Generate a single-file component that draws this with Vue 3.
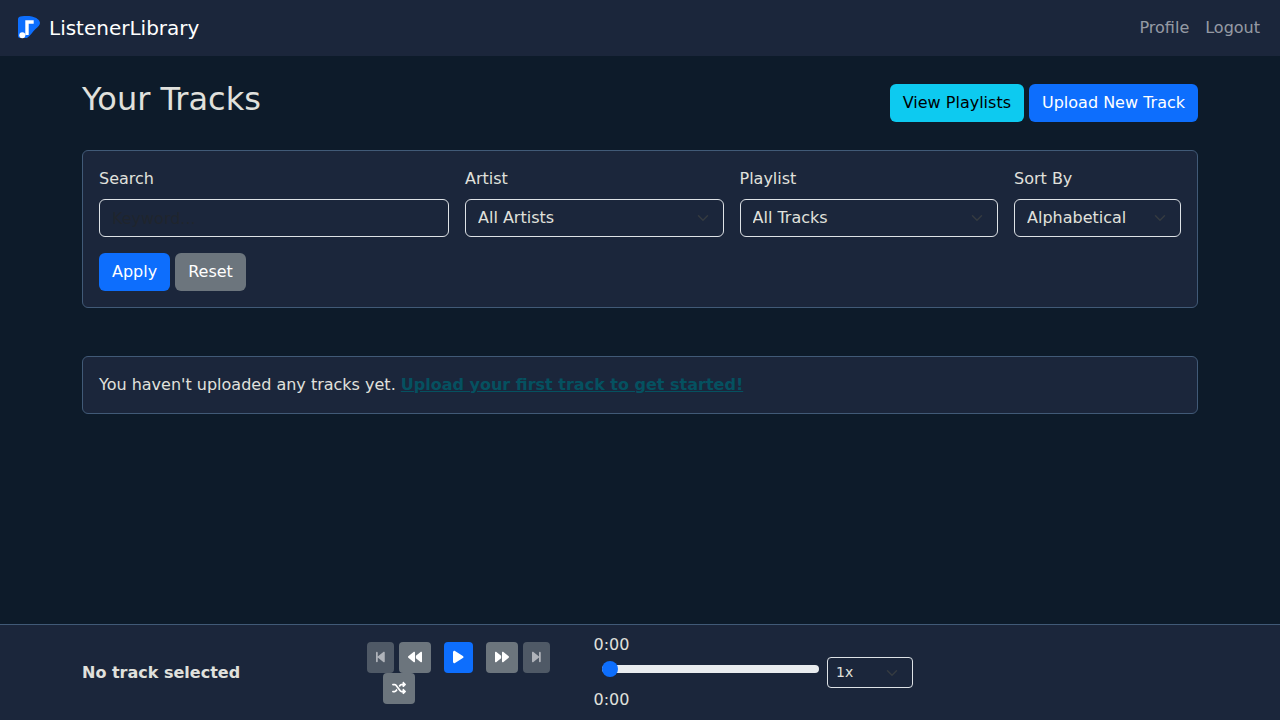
<template>
  <div class="page">
    <nav class="navbar">
      <a class="brand" href="#">
        <svg class="logo" viewBox="0 0 24 24" width="24" height="24">
          <path class="logo-bg" d="M1 3C1 1.500 2.500.5 5 .3 8 0 12 0 15 .5c4 .8 8 3.500 8 6.500 0 2-2 4-4.500 6-3 2.500-5 7-8.500 9H3c-1.200 0-2-1-2-2z" />
          <path class="logo-note" d="M8.300 19V4.300h8.400v3.400h-5V19z" />
          <circle class="logo-note" cx="5.300" cy="19.300" r="3" />
        </svg>
        ListenerLibrary
      </a>
      <div class="nav-links">
        <a href="#">Profile</a>
        <a href="#">Logout</a>
      </div>
    </nav>

    <main class="container">
      <div class="heading">
        <h1>Your Tracks</h1>
        <div class="heading-actions">
          <a class="btn btn-info" href="#">View Playlists</a>
          <a class="btn btn-primary" href="#">Upload New Track</a>
        </div>
      </div>

      <form class="card filters" @submit.prevent>
        <div class="row">
          <div class="col col-4">
            <label for="search">Search</label>
            <input id="search" v-model="search" class="field" type="text" placeholder="Keyword..." />
          </div>
          <div class="col col-3">
            <label for="artist">Artist</label>
            <select id="artist" v-model="artist" class="field select">
              <option>All Artists</option>
            </select>
          </div>
          <div class="col col-3">
            <label for="playlist">Playlist</label>
            <select id="playlist" v-model="playlist" class="field select">
              <option>All Tracks</option>
            </select>
          </div>
          <div class="col col-2">
            <label for="sort">Sort By</label>
            <select id="sort" v-model="sort" class="field select">
              <option>Alphabetical</option>
              <option>Newest</option>
            </select>
          </div>
        </div>
        <div class="filter-actions">
          <button class="btn btn-primary" type="submit">Apply</button>
          <button class="btn btn-secondary" type="button" @click="search = ''">Reset</button>
        </div>
      </form>

      <div class="card empty">
        You haven't uploaded any tracks yet.
        <a href="#">Upload your first track to get started!</a>
      </div>
    </main>

    <footer class="player">
      <div class="now-playing">No track selected</div>
      <div class="controls">
        <div class="controls-row">
          <button class="ctl ctl-skip" disabled>
            <svg viewBox="0 0 320 512" width="8.75" height="14"><path d="M267.500 440.600c9.500 7.900 22.800 9.700 34.100 4.400s18.400-16.600 18.400-29V96c0-12.400-7.200-23.700-18.400-29s-24.500-3.600-34.100 4.400l-192 160L64 241V96c0-17.700-14.300-32-32-32S0 78.300 0 96V416c0 17.700 14.300 32 32 32s32-14.300 32-32V271l11.500 9.600 192 160z" /></svg>
          </button>
          <button class="ctl">
            <svg viewBox="0 0 512 512" width="14" height="14"><path d="M459.500 440.600c9.500 7.900 22.800 9.700 34.100 4.400s18.400-16.600 18.400-29V96c0-12.400-7.200-23.700-18.400-29s-24.500-3.600-34.100 4.400L288 214.300V256v41.700L459.500 440.600zM256 352V256 128 96c0-12.400-7.200-23.700-18.400-29s-24.500-3.600-34.100 4.400l-192 160C4.200 237.500 0 246.500 0 256s4.200 18.500 11.500 24.600l192 160c9.500 7.900 22.800 9.700 34.100 4.400s18.400-16.600 18.400-29V352z" /></svg>
          </button>
          <button class="ctl ctl-play">
            <svg viewBox="0 0 384 512" width="10.5" height="14"><path d="M73 39c-14.800-9.100-33.400-9.400-48.500-.9S0 62.600 0 80V432c0 17.400 9.400 33.400 24.500 41.900s33.700 8.100 48.500-.9L361 297c14.300-8.700 23-24.200 23-41s-8.700-32.200-23-41L73 39z" /></svg>
          </button>
          <button class="ctl">
            <svg viewBox="0 0 512 512" width="14" height="14"><path d="M52.500 440.600c-9.500 7.900-22.800 9.700-34.100 4.400S0 428.400 0 416V96C0 83.600 7.200 72.300 18.400 67s24.500-3.600 34.100 4.400L224 214.300V256v41.700L52.500 440.600zM256 352V256 128 96c0-12.400 7.200-23.700 18.400-29s24.500-3.600 34.100 4.400l192 160c7.300 6.100 11.500 15.100 11.500 24.600s-4.200 18.500-11.500 24.600l-192 160c-9.500 7.900-22.800 9.700-34.100 4.400s-18.400-16.600-18.400-29V352z" /></svg>
          </button>
          <button class="ctl ctl-skip" disabled>
            <svg viewBox="0 0 320 512" width="8.75" height="14"><path d="M52.500 440.600c-9.500 7.900-22.800 9.700-34.100 4.400S0 428.400 0 416V96C0 83.600 7.200 72.300 18.400 67s24.500-3.600 34.100 4.400l192 160L256 241V96c0-17.700 14.300-32 32-32s32 14.300 32 32V416c0 17.700-14.300 32-32 32s-32-14.300-32-32V271l-11.500 9.600-192 160z" /></svg>
          </button>
        </div>
        <button class="ctl ctl-shuffle">
          <svg viewBox="0 0 512 512" width="14" height="14"><path d="M403.800 34.400c12-5 25.700-2.200 34.900 6.900l64 64c6 6 9.400 14.100 9.400 22.600s-3.400 16.600-9.400 22.600l-64 64c-9.200 9.200-22.900 11.900-34.900 6.900s-19.800-16.600-19.800-29.600V160H352c-10.100 0-19.600 4.700-25.600 12.800L284 229.300 244 176l31.200-41.600C293.300 110.200 321.800 96 352 96h32V64c0-12.900 7.800-24.600 19.800-29.600zM164 282.700L204 336l-31.200 41.600C154.700 401.800 126.200 416 96 416H32c-17.700 0-32-14.300-32-32s14.300-32 32-32H96c10.100 0 19.600-4.700 25.600-12.800L164 282.700zm274.600 188c-9.200 9.200-22.900 11.900-34.900 6.900s-19.800-16.600-19.800-29.600V416H352c-30.200 0-58.700-14.200-76.800-38.400L121.600 172.800c-6-8.100-15.500-12.800-25.600-12.800H32c-17.700 0-32-14.300-32-32s14.300-32 32-32H96c30.200 0 58.700 14.200 76.800 38.400L326.400 339.200c6 8.100 15.500 12.800 25.600 12.800h32V320c0-12.900 7.800-24.600 19.800-29.600s25.700-2.200 34.900 6.900l64 64c6 6 9.400 14.100 9.400 22.600s-3.400 16.600-9.400 22.600l-64 64z" /></svg>
        </button>
      </div>
      <div class="timeline">
        <div class="time">0:00</div>
        <div class="seek-row">
          <input v-model="position" class="seek" type="range" min="0" max="100" />
          <select v-model="speed" class="speed">
            <option>1x</option>
            <option>1.5x</option>
            <option>2x</option>
          </select>
        </div>
        <div class="time">0:00</div>
      </div>
    </footer>
  </div>
</template>

<script setup>
import { ref } from 'vue'

const search = ref('')
const artist = ref('All Artists')
const playlist = ref('All Tracks')
const sort = ref('Alphabetical')
const position = ref(0)
const speed = ref('1x')
</script>

<style>
html,
body {
  margin: 0;
  background: #0d1b2a;
}
</style>

<style scoped>
* {
  box-sizing: border-box;
}
.page {
  min-height: 100vh;
  display: flex;
  flex-direction: column;
  background: #0d1b2a;
  color: #e0e1dd;
  font-family: "DejaVu Sans", sans-serif;
  font-size: 16px;
  line-height: 24px;
}

.navbar {
  height: 56px;
  padding: 0 20px 0 17px;
  display: flex;
  align-items: center;
  justify-content: space-between;
  background: #1b263b;
}
.brand {
  display: flex;
  align-items: center;
  gap: 8px;
  color: #fff;
  font-size: 20px;
  text-decoration: none;
}
.logo-bg {
  fill: #0d6efd;
}
.logo-note {
  fill: #fff;
}
.nav-links {
  display: flex;
  gap: 16px;
}
.nav-links a {
  color: rgba(255, 255, 255, 0.55);
  text-decoration: none;
}

.container {
  flex: 1;
  width: 1140px;
  margin: 0 auto;
  padding: 24px 12px 0;
}
.heading {
  display: flex;
  align-items: center;
  justify-content: space-between;
  margin-bottom: 24px;
}
h1 {
  margin: 0 0 8px;
  font-size: 32px;
  font-weight: 400;
  line-height: 38.4px;
}
.heading-actions {
  display: flex;
  gap: 5px;
}

.btn {
  display: inline-block;
  height: 38px;
  padding: 6px 12px;
  border: 1px solid transparent;
  border-radius: 6px;
  font: inherit;
  text-decoration: none;
  cursor: pointer;
}
.btn-primary {
  background: #0d6efd;
  color: #fff;
}
.btn-info {
  background: #0dcaf0;
  color: #000;
}
.btn-secondary {
  background: #6c757d;
  color: #fff;
}

.card {
  border: 1px solid #415a77;
  border-radius: 6px;
  background: #1b263b;
  padding: 16px;
}
.filters {
  margin-bottom: 48px;
}
.row {
  display: flex;
  margin: 0 -8px;
}
.col {
  padding: 0 8px;
}
.col-4 {
  width: 33.33333333%;
}
.col-3 {
  width: 25%;
}
.col-2 {
  width: 16.66666667%;
}
label {
  display: block;
  margin-bottom: 8px;
}
.field {
  display: block;
  width: 100%;
  height: 38px;
  padding: 6px 12px;
  border: 1px solid #dee2e6;
  border-radius: 6px;
  background: transparent;
  color: #e0e1dd;
  font: inherit;
  outline: none;
}
.field::placeholder {
  color: rgba(33, 37, 41, 0.75);
}
.select,
.speed {
  appearance: none;
  background-image: url("data:image/svg+xml,%3csvg xmlns='http://www.w3.org/2000/svg' viewBox='0 0 16 16'%3e%3cpath fill='none' stroke='%23343a40' stroke-linecap='round' stroke-linejoin='round' stroke-width='2' d='m2 5 6 6 6-6'/%3e%3c/svg%3e");
  background-repeat: no-repeat;
  background-position: right 12px center;
  background-size: 16px 12px;
}
.filter-actions {
  display: flex;
  gap: 5px;
  margin-top: 16px;
}
.empty a {
  color: #055160;
  font-weight: 700;
}

.player {
  height: 96px;
  padding: 8px 82px 8px;
  display: flex;
  align-items: center;
  border-top: 1px solid #415a77;
  background: #1b263b;
}
.now-playing {
  width: 285px;
  font-weight: 700;
}
.controls {
  width: 226.5px;
}
.controls-row {
  display: flex;
  align-items: center;
}
.ctl {
  display: flex;
  align-items: center;
  justify-content: center;
  width: 32px;
  height: 31px;
  padding: 0;
  border: 1px solid transparent;
  border-radius: 4px;
  background: #6c757d;
  cursor: pointer;
}
.ctl svg {
  display: block;
  fill: #fff;
}
.ctl-skip {
  width: 27px;
  opacity: 0.65;
}
.ctl-skip:first-child {
  margin-right: 5px;
}
.ctl-skip:last-child {
  margin-left: 5px;
}
.ctl-play {
  width: 29px;
  margin: 0 13px;
  background: #0d6efd;
}
.ctl-shuffle {
  margin-left: 16px;
}
.time {
  height: 24px;
}
.seek-row {
  display: flex;
  align-items: flex-start;
  padding-left: 8.5px;
}
.seek {
  appearance: none;
  display: block;
  width: 217px;
  height: 24px;
  margin: 0;
  padding: 0;
  background: transparent;
}
.seek::-webkit-slider-runnable-track {
  height: 8px;
  border-radius: 16px;
  background: #e9ecef;
}
.seek::-webkit-slider-thumb {
  appearance: none;
  width: 16px;
  height: 16px;
  margin-top: -4px;
  border: 0;
  border-radius: 50%;
  background: #0d6efd;
}
.speed {
  width: 86px;
  height: 31px;
  margin-left: 8px;
  padding: 4px 8px;
  border: 1px solid #dee2e6;
  border-radius: 4px;
  background-color: transparent;
  color: #e0e1dd;
  font-family: inherit;
  font-size: 14px;
  line-height: 21px;
  outline: none;
}
</style>
